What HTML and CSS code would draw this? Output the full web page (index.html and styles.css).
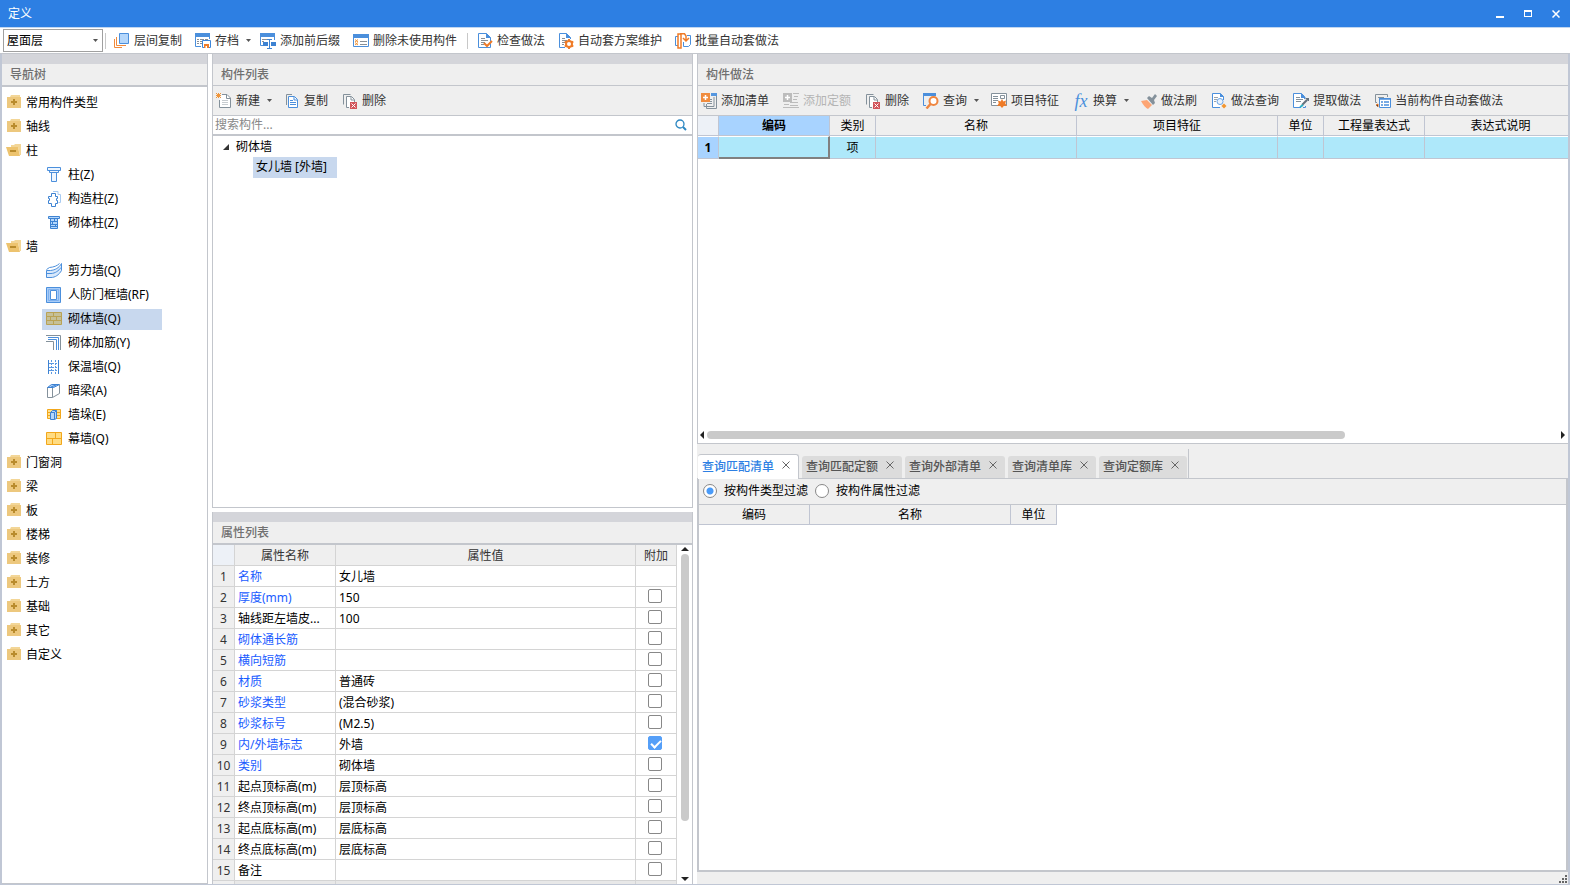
FILE: index.html
```html
<!DOCTYPE html>
<html lang="zh-CN">
<head>
<meta charset="utf-8">
<title>定义</title>
<link rel="stylesheet" href="styles.css">
</head>
<body>
<svg class="sprite" aria-hidden="true">
  <symbol id="folder" viewBox="0 0 16 16"><path fill="#f3d697" d="M5 0h9v2H4z"/><path fill="#edc87e" d="M1 2h14v11H1z"/><path fill="#b98b2c" d="M7 4h2v2h2v2H9v2H7V8H5V6h2z"/></symbol>
  <symbol id="folder-open" viewBox="0 0 16 16"><path fill="#f3d697" d="M5 2h3l1-1h6v11h-1L12 4H5z"/><path fill="#edc36e" d="M0 4h12l2 9H3z"/><path fill="#b98b2c" d="M4 7h6v2H4z"/></symbol>
  <symbol id="caret" viewBox="0 0 5 3"><path fill="#555" d="M0 0h5L2.500 3z"/></symbol>
  <symbol id="i-layers" viewBox="0 0 16 16"><path fill="none" stroke="#f08a3c" d="M.500 6v8.500H8M2.500 4v8.500H12"/><path fill="#b5d7fb" stroke="#4b8fdc" d="M5.500.500h9v10h-9z"/></symbol>
  <symbol id="i-save" viewBox="0 0 16 16"><path fill="#4b8fdc" d="M0 0h15v4H0z"/><path fill="none" stroke="#4b8fdc" d="M.500 4v9.500H6M14.500 4v2"/><path stroke="#888f96" d="M2 6.500h2m1 0h4m1 0h3M2 8.500h2m1 0h2M2 10.500h2m1 0h2"/><path fill="#fff" stroke="#3d86da" d="M7.500 7.500h8v7h-8z"/><path fill="#ef7b27" d="M9 11h5v4H9z"/><path fill="#fff" d="M10.500 13h1.500v2h-1.500z"/></symbol>
  <symbol id="i-fix" viewBox="0 0 16 16"><path fill="#4b8fdc" d="M0 0h15v4H0z"/><path fill="none" stroke="#4b8fdc" d="M.500 4v8.500H3M14.500 4v3"/><path stroke="#888f96" d="M2 6.500h5M2 8.500h2"/><path fill="#3d82d2" d="M3 9h5v4H3zM11 9h5v4h-5z"/><path fill="none" stroke="#3d82d2" d="M7 6.500h5M9.500 6.500v9M7 15.500h5"/></symbol>
  <symbol id="i-unused" viewBox="0 0 16 16"><path fill="#fff" stroke="#4b8fdc" d="M.500 1.500h15v12H.500z"/><path fill="#4b8fdc" d="M0 1h16v4H0z"/><path stroke="#888f96" d="M7 8.500h7M7 11.500h7"/><path stroke="#f0953a" d="M2 6.500l3 2.500M5 6.500L2 9M2 9.500L5 12M5 9.500L2 12"/></symbol>
  <symbol id="i-check" viewBox="0 0 16 16"><path fill="#fff" stroke="#4b8fdc" d="M1.500.500h8l4 4v10h-12z"/><path fill="#4b8fdc" d="M9 0l5 5H9z"/><path stroke="#888f96" d="M4 5.500h4M4 7.500h7M4 9.500h4M4 11.500h3"/><path fill="none" stroke="#ef7b27" stroke-width="2" d="M7 10l3 3 5-5"/></symbol>
  <symbol id="i-gear" viewBox="0 0 16 16"><path fill="#fff" stroke="#4b8fdc" d="M7 14.500H1.500V.500h7l4 4V6"/><path fill="#4b8fdc" d="M8 0l5 5H8z"/><path stroke="#888f96" d="M4 5.500h3M4 7.500h5M4 9.500h3M4 11.500h2"/><circle cx="11" cy="11" r="3" fill="#fff" stroke="#ef7b27" stroke-width="2"/><path stroke="#ef7b27" stroke-width="2" d="M11 6v2m0 6v2M6.700 8.500l1.700 1m5.200 3l1.700 1m-8.600 0l1.700-1m5.200-3l1.700-1"/></symbol>
  <symbol id="i-batch" viewBox="0 0 16 16"><path fill="none" stroke="#4b8fdc" d="M3 3.500H.500v9H3M12 2.500h3.500v9l-2 2H12"/><path fill="#fff" stroke="#ef7b27" stroke-width="1.500" d="M3 1h3v14H3z"/><path fill="none" stroke="#ef7b27" stroke-width="1.500" d="M5 .8h4.500L11 3v4M8 5l3 3 3-3"/><path fill="none" stroke="#4b8fdc" d="M8.500 9v4.500H12"/></symbol>
  <symbol id="i-new" viewBox="0 0 16 16"><path fill="#fff" stroke="#84919b" d="M6 1.500h5l3.500 3.500v9.500h-11V7"/><path fill="none" stroke="#84919b" d="M10.500 2v3.500H14"/><path stroke="#c7ccd0" d="M6 7.500h6M6 9.500h6M6 11.500h6"/><path stroke="#f0953a" d="M2.500 0v5M0 2.500h5M0 0l5 5M5 0L0 5"/></symbol>
  <symbol id="i-copy" viewBox="0 0 16 16"><path fill="none" stroke="#84919b" d="M2.500 12V1.500H8"/><path fill="#fff" stroke="#4b8fdc" d="M4.500 3.500h6l3 3v8h-9z"/><path fill="none" stroke="#4b8fdc" d="M10 4v3h3M6 7.500h3M6 9.500h6M6 11.500h6"/></symbol>
  <symbol id="i-del" viewBox="0 0 16 16"><path fill="none" stroke="#84919b" d="M1.500 11.500V1.500h7"/><path fill="#fff" stroke="#84919b" d="M7 14.500H4.500v-11h5l3 3V9"/><path fill="none" stroke="#84919b" d="M9 4v3h3"/><path fill="#d2555b" d="M8 9h7v7H8z"/><path stroke="#fff" d="M9.500 10.500l4 4m0-4l-4 4"/></symbol>
  <symbol id="i-addlist" viewBox="0 0 16 16"><path fill="#5597e0" d="M10 0h6v3h-6z"/><path fill="none" stroke="#84919b" d="M15.500 3v12.500H5.500V11M3 10v3.500h10V4M8 6.500h3M8 8.500h3M6 10.500h5"/><path fill="#f08c3e" d="M0 0h9v9H0z"/><path stroke="#fff" stroke-width="1.500" d="M4.500 2v5M2 4.500h5"/></symbol>
  <symbol id="i-addquota" viewBox="0 0 16 16"><path fill="#bcbcbc" d="M0 0h9v9H0z"/><path stroke="#fff" stroke-width="1.500" d="M4.500 2v5M2 4.500h5"/><path stroke="#bcbcbc" d="M10 .500h6M11 3.500h4M10 6.500h4M7 9.500h8M1 11.500h5M7 12.500h8M0 14.500h16"/></symbol>
  <symbol id="i-query" viewBox="0 0 16 16"><path fill="#4b8fdc" d="M0 0h13v3H0z"/><path fill="none" stroke="#4b8fdc" d="M.500 3v9.500H3"/><circle cx="10.500" cy="8" r="4" fill="#fff" stroke="#ef8640" stroke-width="2"/><path stroke="#ef8640" stroke-width="2.500" d="M7.500 11l-4 4.500"/></symbol>
  <symbol id="i-feature" viewBox="0 0 16 16"><path fill="#fff" stroke="#84919b" d="M.500.500h15v12H.500z"/><path fill="none" stroke="#84919b" d="M9.500 2.500h4v3h-4zM2 3.500h5M2 5.500h5M2 7.500h5M2 9.500h3"/><path fill="#ef7b27" d="M11 6l1.400 2.500L15 7.500 14.300 10.500 16 13l-3-.2L11 15l-2-2.200-3 .2 1.700-2.500L7 7.500l2.600 1z"/></symbol>
  <symbol id="i-brush" viewBox="0 0 16 16"><path fill="#fda574" d="M0 8l6-1 5 5-4 4c-2-1-5-4-7-8z"/><path fill="#84919b" d="M6 5l2-2 3 2 3-4 2 2-3 4 1 3-2 2z"/></symbol>
  <symbol id="i-dq" viewBox="0 0 16 16"><path fill="#fff" stroke="#4b8fdc" d="M9 14.500H1.500V.500h8l3 3V7"/><path fill="#4b8fdc" d="M9 0l4 4H9z"/><path stroke="#9aa3ab" d="M3 4.500h4M3 6.500h3M3 8.500h2"/><circle cx="9" cy="8.500" r="3" fill="#e8f2fd" stroke="#6aa3e4"/><path fill="#f3962f" d="M13 10.500l2.500 2.500-2.500 2.500-2.500-2.500z"/></symbol>
  <symbol id="i-extract" viewBox="0 0 16 16"><path fill="#fff" stroke="#4b8fdc" d="M8 14.500H.500V.500h8l3 3V6M10 14.500h2.500V13"/><path fill="#4b8fdc" d="M8 0l5 5H8z"/><path stroke="#84919b" d="M3 4.500h4M3 6.500h7M3 8.500h5"/><path stroke="#64717c" stroke-width="2" d="M9 12l5-5"/><path fill="#64717c" d="M12 5h4v3h-1z"/><path stroke="#28b3c4" stroke-width="2" d="M7 14l3-2"/></symbol>
  <symbol id="i-auto" viewBox="0 0 16 16"><path fill="none" stroke="#84919b" d="M2 9.500H.500v-8h12V4M3 4.500h6"/><path fill="#fff" stroke="#4b8fdc" d="M4.500 5.500h11v9h-11z"/><path fill="none" stroke="#4b8fdc" stroke-width="1.500" d="M4 6h12M6 9h2m1 0h5M6 12h2m1 0h5"/><path stroke="#ef7b27" d="M1 12l2-1v3"/></symbol>
  <symbol id="i-search" viewBox="0 0 12 12"><circle cx="5" cy="5" r="4" fill="none" stroke="#2c87c2" stroke-width="1.300"/><path stroke="#2c87c2" stroke-width="2" d="M8 8l3 3"/></symbol>
  <symbol id="w-column" viewBox="0 0 16 16"><path fill="#eef6ff" stroke="#4b8fdc" d="M1.500.500h13v3h-13zM5.500 5.500h5v9h-5zM3.500 3.500h9v2h-9z"/></symbol>
  <symbol id="w-struct" viewBox="0 0 16 16"><path fill="none" stroke="#a8cbf2" d="M7 .500h5v3h2.500v8h-2"/><path fill="#fff" stroke="#3d82d2" d="M5.500 2.500h4v3h2v2h-1v2h1v3h-2v3h-4v-3h-3v-3h1v-2h-1v-2h3z"/></symbol>
  <symbol id="w-brickcol" viewBox="0 0 16 16"><path fill="#b5d7fb" stroke="#3d82d2" d="M2.500 1.500h11v2h-11zM4.500 3.500h7v10h-7zM5 6.500h6M5 9.500h6M5 11.500h6M8.500 4v2M6.500 7v2M9.500 10v2"/></symbol>
  <symbol id="w-shear" viewBox="0 0 16 16"><path fill="#d9e9fc" stroke="#4b8fdc" d="M.500 7.500h4C9 7 13 5 15.500.500v7C13 12 9 14.500 5 14.500H.500z"/><path fill="none" stroke="#4b8fdc" d="M.500 6.500l3-2C8 4 11 3 13.500.500M1 10.500h4c4 0 8-3 10-6"/></symbol>
  <symbol id="w-door" viewBox="0 0 16 16"><path fill="#a9cdf8" stroke="#4b8fdc" d="M.500.500h14v15H.500z"/><path fill="#fff" stroke="#4b8fdc" d="M4.500 3.500h6v9h-6z"/><path fill="none" stroke="#7eb1ef" d="M2.500 2.500h10v11h-10z"/></symbol>
  <symbol id="w-brick" viewBox="0 0 16 16"><path fill="#c5c098" stroke="#b9a254" d="M.500 1.500h15v12H.500zM.500 5.500h15M.500 9.500h15M7.500 1.500v4M4.500 5.500v4M10.500 5.500v4M7.500 9.500v4"/></symbol>
  <symbol id="w-rebar" viewBox="0 0 16 16"><path fill="none" stroke="#84919b" d="M0 .500h14.500V15M0 6.500h7.500V15"/><path fill="none" stroke="#4b8fdc" d="M2 2.500h10.500V15M2 4.500h8.500V15"/></symbol>
  <symbol id="w-insul" viewBox="0 0 16 16"><path stroke="#3d82d2" d="M2.500 1v14M12.500 1v14"/><path stroke="#5b99e2" stroke-dasharray="2 1" d="M5.500 1v14M9.500 1v14M3 4.500h9M3 8.500h9M3 11.500h9"/></symbol>
  <symbol id="w-beam" viewBox="0 0 16 16"><path fill="#fff" stroke="#84919b" d="M1.500 4.500h5v10h-5zM6.500 14.500l7-4V2"/><path fill="#a9cdf8" stroke="#3d82d2" d="M1.500 4.500l4-3h8l-6 3zM5 4l5-2"/></symbol>
  <symbol id="w-pier" viewBox="0 0 16 16"><path fill="#ffe191" stroke="#f2a71b" d="M1.500 2.500h13v9h-13zM1.500 5.500h13M1.500 8.500h13"/><path fill="#b5d7fb" stroke="#3d82d2" d="M4.500 5.500l2-2h4v8l-2 1h-4zM4.500 5.500h4v7M8.500 5.500l2-2"/></symbol>
  <symbol id="w-curtain" viewBox="0 0 16 16"><path fill="#ffdc82" stroke="#f2a71b" d="M.500 1.500h15v12H.500zM.500 7.500h15M9.500 1.500v6M6.500 7.500v6"/></symbol>
</svg>

<header class="titlebar">
  <h1>定义</h1>
  <div class="winbtns">
    <button aria-label="最小化"><svg viewBox="0 0 8 8"><path fill="#fff" d="M0 6h8v2H0z"/></svg></button>
    <button aria-label="最大化"><svg viewBox="0 0 8 8"><path fill="#fff" fill-rule="evenodd" d="M0 0h8v7H0zM1 2v4h6V2z"/></svg></button>
    <button aria-label="关闭"><svg viewBox="0 0 8 8"><path stroke="#fff" stroke-width="1.500" d="M.500.500l7 7m0-7l-7 7"/></svg></button>
  </div>
</header>

<div class="toolbar main-tools" role="toolbar">
  <div class="floor"><select aria-label="楼层"><option>屋面层</option></select><svg class="caret"><use href="#caret"/></svg></div>
  <span class="sep"></span>
  <button><svg><use href="#i-layers"/></svg>层间复制</button>
  <button class="drop"><svg><use href="#i-save"/></svg>存档<svg class="caret"><use href="#caret"/></svg></button>
  <button><svg><use href="#i-fix"/></svg>添加前后缀</button>
  <button><svg><use href="#i-unused"/></svg>删除未使用构件</button>
  <span class="sep"></span>
  <button><svg><use href="#i-check"/></svg>检查做法</button>
  <button><svg><use href="#i-gear"/></svg>自动套方案维护</button>
  <button><svg><use href="#i-batch"/></svg>批量自动套做法</button>
</div>

<main class="workspace">
  <nav class="panel nav">
    <h2>导航树</h2>
    <ul class="tree">
      <li><svg><use href="#folder"/></svg>常用构件类型</li>
      <li><svg><use href="#folder"/></svg>轴线</li>
      <li><svg><use href="#folder-open"/></svg>柱</li>
      <li class="child"><span><svg><use href="#w-column"/></svg>柱(Z)</span></li>
      <li class="child"><span><svg><use href="#w-struct"/></svg>构造柱(Z)</span></li>
      <li class="child"><span><svg><use href="#w-brickcol"/></svg>砌体柱(Z)</span></li>
      <li><svg><use href="#folder-open"/></svg>墙</li>
      <li class="child"><span><svg><use href="#w-shear"/></svg>剪力墙(Q)</span></li>
      <li class="child"><span><svg><use href="#w-door"/></svg>人防门框墙(RF)</span></li>
      <li class="child selected"><span><svg><use href="#w-brick"/></svg>砌体墙(Q)</span></li>
      <li class="child"><span><svg><use href="#w-rebar"/></svg>砌体加筋(Y)</span></li>
      <li class="child"><span><svg><use href="#w-insul"/></svg>保温墙(Q)</span></li>
      <li class="child"><span><svg><use href="#w-beam"/></svg>暗梁(A)</span></li>
      <li class="child"><span><svg><use href="#w-pier"/></svg>墙垛(E)</span></li>
      <li class="child"><span><svg><use href="#w-curtain"/></svg>幕墙(Q)</span></li>
      <li><svg><use href="#folder"/></svg>门窗洞</li>
      <li><svg><use href="#folder"/></svg>梁</li>
      <li><svg><use href="#folder"/></svg>板</li>
      <li><svg><use href="#folder"/></svg>楼梯</li>
      <li><svg><use href="#folder"/></svg>装修</li>
      <li><svg><use href="#folder"/></svg>土方</li>
      <li><svg><use href="#folder"/></svg>基础</li>
      <li><svg><use href="#folder"/></svg>其它</li>
      <li><svg><use href="#folder"/></svg>自定义</li>
    </ul>
  </nav>

  <div class="middle">
    <section class="panel components">
      <h2>构件列表</h2>
      <div class="toolbar" role="toolbar">
        <button class="drop"><svg><use href="#i-new"/></svg>新建<svg class="caret"><use href="#caret"/></svg></button>
        <button><svg><use href="#i-copy"/></svg>复制</button>
        <button><svg><use href="#i-del"/></svg>删除</button>
      </div>
      <div class="search"><input type="text" placeholder="搜索构件..." aria-label="搜索构件"><button aria-label="搜索"><svg><use href="#i-search"/></svg></button></div>
      <ul class="component-tree">
        <li><svg viewBox="0 0 6 6"><path fill="#333" d="M6 0v6H0z"/></svg>砌体墙</li>
        <li class="leaf"><span>女儿墙 [外墙]</span></li>
      </ul>
    </section>

    <section class="panel props">
      <h2>属性列表</h2>
      <div class="props-body">
        <div class="props-clip">
        <table>
          <colgroup><col class="c-num"><col class="c-name"><col><col class="c-add"></colgroup>
          <thead><tr><th></th><th>属性名称</th><th>属性值</th><th>附加</th></tr></thead>
          <tbody>
            <tr><th>1</th><td class="key">名称</td><td>女儿墙</td><td></td></tr>
            <tr><th>2</th><td class="key">厚度(mm)</td><td>150</td><td><input type="checkbox" aria-label="厚度附加"></td></tr>
            <tr><th>3</th><td>轴线距左墙皮...</td><td>100</td><td><input type="checkbox" aria-label="轴线距左墙皮附加"></td></tr>
            <tr><th>4</th><td class="key">砌体通长筋</td><td></td><td><input type="checkbox" aria-label="砌体通长筋附加"></td></tr>
            <tr><th>5</th><td class="key">横向短筋</td><td></td><td><input type="checkbox" aria-label="横向短筋附加"></td></tr>
            <tr><th>6</th><td class="key">材质</td><td>普通砖</td><td><input type="checkbox" aria-label="材质附加"></td></tr>
            <tr><th>7</th><td class="key">砂浆类型</td><td>(混合砂浆)</td><td><input type="checkbox" aria-label="砂浆类型附加"></td></tr>
            <tr><th>8</th><td class="key">砂浆标号</td><td>(M2.5)</td><td><input type="checkbox" aria-label="砂浆标号附加"></td></tr>
            <tr><th>9</th><td class="key">内/外墙标志</td><td>外墙</td><td><input type="checkbox" checked aria-label="内/外墙标志附加"></td></tr>
            <tr><th>10</th><td class="key">类别</td><td>砌体墙</td><td><input type="checkbox" aria-label="类别附加"></td></tr>
            <tr><th>11</th><td>起点顶标高(m)</td><td>层顶标高</td><td><input type="checkbox" aria-label="起点顶标高附加"></td></tr>
            <tr><th>12</th><td>终点顶标高(m)</td><td>层顶标高</td><td><input type="checkbox" aria-label="终点顶标高附加"></td></tr>
            <tr><th>13</th><td>起点底标高(m)</td><td>层底标高</td><td><input type="checkbox" aria-label="起点底标高附加"></td></tr>
            <tr><th>14</th><td>终点底标高(m)</td><td>层底标高</td><td><input type="checkbox" aria-label="终点底标高附加"></td></tr>
            <tr><th>15</th><td>备注</td><td></td><td><input type="checkbox" aria-label="备注附加"></td></tr>
            <tr class="group"><th></th><td></td><td></td><td></td></tr>
          </tbody>
        </table>
        </div>
        <div class="vscroll"><svg viewBox="0 0 8 4"><path fill="#222" d="M0 4l4-4 4 4z"/></svg><div class="track"><div class="thumb"></div><div class="rest"></div></div><svg viewBox="0 0 8 4"><path fill="#222" d="M0 0h8L4 4z"/></svg></div>
      </div>
    </section>
  </div>

  <div class="right">
    <section class="panel practice">
      <h2>构件做法</h2>
      <div class="toolbar" role="toolbar">
        <button><svg><use href="#i-addlist"/></svg>添加清单</button>
        <button disabled><svg><use href="#i-addquota"/></svg>添加定额</button>
        <button><svg><use href="#i-del"/></svg>删除</button>
        <button class="drop"><svg><use href="#i-query"/></svg>查询<svg class="caret"><use href="#caret"/></svg></button>
        <button><svg><use href="#i-feature"/></svg>项目特征</button>
        <button class="drop"><i class="fx">fx</i>换算<svg class="caret"><use href="#caret"/></svg></button>
        <button><svg><use href="#i-brush"/></svg>做法刷</button>
        <button><svg><use href="#i-dq"/></svg>做法查询</button>
        <button><svg><use href="#i-extract"/></svg>提取做法</button>
        <button><svg><use href="#i-auto"/></svg>当前构件自动套做法</button>
      </div>
      <table class="grid">
        <colgroup><col class="g-num"><col class="g-code"><col class="g-unit"><col class="g-name"><col class="g-name"><col class="g-unit"><col class="g-expr"><col></colgroup>
        <thead><tr><th></th><th class="current">编码</th><th>类别</th><th>名称</th><th>项目特征</th><th>单位</th><th>工程量表达式</th><th>表达式说明</th></tr></thead>
        <tbody><tr><th class="current">1</th><td class="cell-current"></td><td>项</td><td></td><td></td><td></td><td></td><td></td></tr></tbody>
      </table>
      <div class="hscroll"><svg viewBox="0 0 4 8"><path fill="#222" d="M4 0v8L0 4z"/></svg><div class="track"><div class="thumb"></div><div class="rest"></div></div><svg viewBox="0 0 4 8"><path fill="#222" d="M0 0l4 4-4 4z"/></svg></div>
    </section>

    <section class="lookup">
      <div class="tabs" role="tablist">
        <div class="tab active"><button role="tab" aria-selected="true">查询匹配清单</button><button class="close" aria-label="关闭"><svg viewBox="0 0 8 8"><path d="M.500.500l7 7m0-7l-7 7"/></svg></button></div>
        <div class="tab"><button role="tab">查询匹配定额</button><button class="close" aria-label="关闭"><svg viewBox="0 0 8 8"><path d="M.500.500l7 7m0-7l-7 7"/></svg></button></div>
        <div class="tab"><button role="tab">查询外部清单</button><button class="close" aria-label="关闭"><svg viewBox="0 0 8 8"><path d="M.500.500l7 7m0-7l-7 7"/></svg></button></div>
        <div class="tab"><button role="tab">查询清单库</button><button class="close" aria-label="关闭"><svg viewBox="0 0 8 8"><path d="M.500.500l7 7m0-7l-7 7"/></svg></button></div>
        <div class="tab"><button role="tab">查询定额库</button><button class="close" aria-label="关闭"><svg viewBox="0 0 8 8"><path d="M.500.500l7 7m0-7l-7 7"/></svg></button></div>
        <span class="tab-end"></span>
      </div>
      <div class="lookup-body">
        <div class="filters">
          <label><input type="radio" name="filter" checked>按构件类型过滤</label>
          <label><input type="radio" name="filter">按构件属性过滤</label>
        </div>
        <table class="result">
          <colgroup><col class="g-code"><col class="g-name"><col class="g-unit"></colgroup>
          <thead><tr><th>编码</th><th>名称</th><th>单位</th></tr></thead>
        </table>
      </div>
      <footer class="status"><svg viewBox="0 0 8 8"><path fill="#666" d="M6 0h2v2H6zM3 3h2v2H3zM6 3h2v2H6zM0 6h2v2H0zM3 6h2v2H3zM6 6h2v2H6z"/></svg></footer>
    </section>
  </div>
</main>
</body>
</html>
```
FILE: styles.css
```css
* { box-sizing: border-box; }

body {
  margin: 0;
  height: 100vh;
  display: flex;
  flex-direction: column;
  overflow: hidden;
  background: #fff;
  color: #000;
  font: 12px/18px "Noto Sans", "Noto Sans CJK SC", sans-serif;
}

button, input, select { font: inherit; color: inherit; }
button { border: 0; padding: 0; background: none; }
h1, h2, ul { margin: 0; padding: 0; font-size: 12px; font-weight: 400; list-style: none; }
svg { display: block; width: 16px; height: 16px; flex: none; }
.sprite { position: absolute; width: 0; height: 0; }
table { border-collapse: separate; border-spacing: 0; table-layout: fixed; }
th { font-weight: 400; }

/* Title bar */
.titlebar {
  flex: none;
  height: 28px;
  display: flex;
  align-items: center;
  justify-content: space-between;
  padding: 0 10px 0 8px;
  background: #2d7fe3;
  border-bottom: 1px solid #c0d6f0;
  color: #fff;
}
.winbtns { display: flex; gap: 20px; }
.winbtns svg { width: 8px; height: 8px; }

/* Toolbars */
.toolbar {
  flex: none;
  display: flex;
  align-items: center;
  height: 30px;
  color: #333;
  white-space: nowrap;
  background: #efefef;
  border-bottom: 1px solid #c3c6cc;
}
.toolbar button { display: flex; align-items: center; gap: 4px; padding: 0 7px; }
.toolbar button:disabled { color: #b4b4b4; }
.toolbar .drop { padding-right: 5px; }
.toolbar .caret, .floor .caret { width: 5px; height: 3px; }
.toolbar .drop .caret { margin-left: 3px; }
.panel .toolbar button:first-child { padding-left: 3px; }
.fx { width: 16px; color: #4b8fdc; font: italic 18px/18px "Liberation Serif", serif; }

.main-tools { height: 26px; background: #fff; padding-left: 3px; }
.main-tools button { padding: 0 7px 0 6px; }
.main-tools .drop { padding-right: 3px; }
.main-tools .sep { width: 1px; height: 16px; margin: 0 2px; background: #c8c8c8; }
.main-tools button + .sep { margin: 0 3px; }
.floor { position: relative; }
.floor select {
  display: block;
  appearance: none;
  width: 100px;
  height: 23px;
  padding: 0 3px;
  border: 1px solid #a0a0a0;
  border-radius: 0;
  background: #fff;
  color: #000;
}
.floor .caret { position: absolute; right: 5px; top: 10px; pointer-events: none; }

/* Panels */
.workspace { flex: 1; min-height: 0; display: flex; gap: 4px; border: solid #c0c7d5; border-width: 0 2px 1px; }
.panel { display: flex; flex-direction: column; min-height: 0; border: 1px solid #c3c6cc; border-top: 0; }
.panel h2 {
  flex: none;
  height: 33px;
  padding: 1px 8px 0 8px;
  line-height: 20px;
  font-weight: 500;
  color: #707070;
  background: #efefef;
  border-top: 10px solid #d4d5da;
  border-bottom: 2px solid #c3c6cc;
}
.components h2, .practice h2 { height: 32px; border-bottom-width: 1px; }
.nav { flex: none; width: 206px; border-left: 0; }
.middle { flex: none; width: 481px; display: flex; flex-direction: column; gap: 4px; }
.right { flex: 1; min-width: 0; display: flex; flex-direction: column; }
.components { flex: 454 1 0; }
.props { flex: 372 1 0; border-bottom: 0; }
.practice { flex: 389 1 0; border-right: 0; }
.lookup { flex: 441 1 0; min-height: 0; display: flex; flex-direction: column; }

/* Navigation tree */
.tree { padding-top: 4px; overflow: hidden; }
.tree li { display: flex; align-items: center; height: 24px; padding-left: 4px; gap: 4px; }
.tree .child { padding-left: 40px; }
.child span { display: flex; align-items: center; gap: 6px; width: 120px; height: 21px; padding-left: 4px; }
.selected span { background: #c8d8ee; }

/* Component list */
.search { flex: none; display: flex; align-items: center; height: 20px; border-bottom: 2px solid #c3c6cc; }
.search input { flex: 1; height: 18px; border: 0; padding: 0 2px; outline: 0; background: none; }
.search input::placeholder { color: #888; opacity: 1; }
.search svg { width: 12px; height: 12px; margin-right: 5px; }
.component-tree li { display: flex; align-items: center; gap: 7px; height: 21px; padding-left: 10px; }
.component-tree svg { width: 6px; height: 6px; }
.component-tree .leaf { padding-left: 40px; }
.leaf span { height: 21px; padding: 1px 10px 0 3px; background: #c8d8ee; }

/* Property list */
.props-body { flex: 1; min-height: 0; display: flex; }
.props-clip { flex: 1; overflow: hidden; }
.props table { width: 100%; }
.c-num { width: 22px; }
.c-name { width: 101px; }
.c-add { width: 41px; }
.props th, .props td {
  height: 21px;
  padding: 2px 3px 0;
  line-height: 18px;
  text-align: left;
  white-space: nowrap;
  border: solid #d4d4d4;
  border-width: 0 1px 1px 0;
}
.props th { padding: 2px 0 0; text-align: center; background: #efefef; color: #333; }
.props thead th:first-child { background: #edf1f7; }
.props .key { color: #1a5cff; }
.props .group td { background: #e8e8e8; }
.props td:last-child { padding: 0 2px 0 0; text-align: center; }
input[type="checkbox"] {
  appearance: none;
  display: block;
  width: 14px;
  height: 14px;
  margin: 0 auto 2px;
  border: 1px solid #888;
  border-radius: 2px;
  background: #fff;
}
input[type="checkbox"]:checked {
  position: relative;
  border-color: #559ff8;
  background: #559ff8;
}
input[type="checkbox"]:checked::after {
  content: "";
  position: absolute;
  left: 4px;
  top: 1px;
  width: 4px;
  height: 8px;
  border: solid #fff;
  border-width: 0 2px 2px 0;
  transform: rotate(45deg);
}

/* Scroll bars */
.vscroll { flex: none; width: 15px; display: flex; flex-direction: column; align-items: center; gap: 3px; padding: 2px 0 3px; }
.vscroll svg { width: 8px; height: 4px; }
.vscroll .track { flex: 1; width: 8px; display: flex; flex-direction: column; }
.hscroll { flex: none; height: 15px; margin-top: auto; display: flex; align-items: center; gap: 3px; padding: 0 3px 0 2px; }
.hscroll svg { width: 4px; height: 8px; }
.hscroll .track { flex: 1; height: 8px; display: flex; }
.thumb { flex: 5 1 0; background: #cacaca; border-radius: 4px; }
.rest { flex: 1 1 0; }
.hscroll .thumb { flex-grow: 3; }

/* Grids */
.grid { width: 100%; }
.g-num { width: 21px; }
.g-code { width: 111px; }
.g-unit { width: 46px; }
.g-name { width: 201px; }
.g-expr { width: 101px; }
.grid th, .grid td, .result th {
  height: 20px;
  padding: 0;
  text-align: center;
  border: solid #c0c5d2;
  border-width: 0 1px 1px 0;
}
.grid thead th, .result th { padding-top: 1px; background: #efefef; }
.grid thead th:last-child { padding-left: 8px; }
.grid thead th:first-child { background: #edf1f7; }
.grid thead .current, .grid tbody .current { background: #a8d3ff; font-weight: 700; }
.grid tbody th, .grid tbody td { height: 23px; border-top: 1px solid #fff; }
.grid td { background: #aee8fa; }
.grid .cell-current { border-right: 2px solid #808080; border-bottom: 2px solid #808080; }
.grid tr > :last-child { border-right: 0; }

/* Lookup tabs */
.tabs {
  flex: none;
  display: flex;
  align-items: flex-end;
  height: 35px;
  padding-left: 1px;
  gap: 3px;
  background: #efefef;
  border-bottom: 1px solid #c3c6cc;
}
.tab { display: flex; align-items: center; gap: 8px; height: 22px; padding: 0 8px 0 4px; border-radius: 3px 3px 0 0; background: #dcdcdc; color: #555; font-weight: 500; }
.tab.active { height: 25px; margin-bottom: -1px; background: #fff; color: #2d7fe3; border: 1px solid #c3c6cc; border-width: 1px 1px 0 0; }
.close svg { width: 8px; height: 8px; margin-bottom: 4px; fill: none; stroke: #666; stroke-width: 1px; }
.tab-end { width: 1px; height: 29px; margin-left: -2px; background: #c3c6cc; }
.lookup-body { flex: 1; min-height: 0; border: solid #c3c6cc; border-width: 0 2px 2px; }
.filters { display: flex; align-items: center; gap: 7px; height: 26px; padding-left: 4px; background: #efefef; border-bottom: 1px solid #c3c6cc; }
.filters label { display: flex; align-items: center; gap: 7px; }
input[type="radio"] {
  appearance: none;
  width: 14px;
  height: 14px;
  margin: 0;
  border: 1px solid #888;
  border-radius: 50%;
  background: #fff;
}
input[type="radio"]:checked { background: radial-gradient(circle, #4a9bf8 3px, #fff 4px); }
.status { flex: none; display: flex; align-items: flex-end; justify-content: flex-end; height: 12px; padding: 1px; background: #efefef; }
.status svg { width: 8px; height: 8px; }
```
